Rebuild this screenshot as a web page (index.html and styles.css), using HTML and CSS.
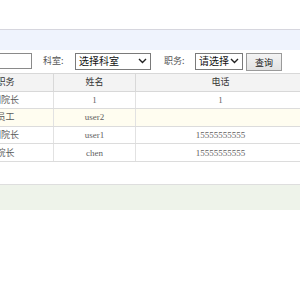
FILE: index.html
```html
<!DOCTYPE html>
<html>
<head>
<meta charset="utf-8">
<link rel="stylesheet" href="styles.css">
</head>
<body>
<div class="page">
  <div class="top"></div>
  <div class="band"></div>
  <div class="filter">
    <span class="input"></span>
    <span class="label lbl1">科室:</span>
    <span class="select sel1"><span>选择科室</span><svg width="9" height="6" viewBox="0 0 9 6"><path d="M1 1 L4.5 4.5 L8 1" fill="none" stroke="#222" stroke-width="1.4"/></svg></span>
    <span class="label lbl2">职务:</span>
    <span class="select sel2"><span>请选择</span><svg width="9" height="6" viewBox="0 0 9 6"><path d="M1 1 L4.5 4.5 L8 1" fill="none" stroke="#222" stroke-width="1.4"/></svg></span>
    <span class="btn">查询</span>
  </div>
  <table class="grid">
    <colgroup><col class="c1"><col class="c2"><col class="c3"></colgroup>
    <thead>
      <tr><th>职务</th><th>姓名</th><th>电话</th></tr>
    </thead>
    <tbody>
      <tr><td>副院长</td><td class="lat">1</td><td class="lat">1</td></tr>
      <tr class="hl"><td>员工</td><td class="lat">user2</td><td class="lat"></td></tr>
      <tr><td>副院长</td><td class="lat">user1</td><td class="lat">15555555555</td></tr>
      <tr><td>院长</td><td class="lat">chen</td><td class="lat">15555555555</td></tr>
    </tbody>
  </table>
  <div class="gap"></div>
  <div class="foot"></div>
</div>
</body>
</html>
```

FILE: styles.css
```css
html, body {
  margin: 0;
  padding: 0;
  background: #fff;
  overflow: hidden;
}
body {
  width: 300px;
  height: 300px;
  font-family: "Noto Sans CJK SC", "Liberation Sans", sans-serif;
  font-size: 9px;
  color: #444;
}
.page {
  width: 348px;
  margin-left: -43px;
}
.top {
  height: 29px;
  border-bottom: 1px solid #d6d6de;
}
.band {
  height: 20px;
  background: #eff3fd;
}
.filter {
  height: 22px;
  display: flex;
  align-items: center;
  padding-left: 13px;
}
.input {
  width: 60px;
  height: 14px;
  border: 1px solid #8a8a8a;
  background: #fff;
}
.label {
  color: #555;
  line-height: 12px;
}
.lbl1 { margin-left: 11px; width: 32px; }
.lbl2 { margin-left: 13px; width: 31px; }
.select {
  height: 15px;
  border: 1px solid #7a7a7a;
  background: #fff;
  display: flex;
  align-items: center;
  justify-content: space-between;
  padding: 0 3px 0 3px;
  box-sizing: content-box;
  color: #111;
  line-height: 12px;
  font-size: 10px;
}
.sel1 { width: 68px; }
.sel2 { width: 40px; }
.btn {
  margin-left: 3px;
  width: 34px;
  height: 16px;
  border: 1px solid #9a9a9a;
  background: linear-gradient(#f4f4f4, #e2e2e2);
  display: flex;
  align-items: center;
  justify-content: center;
  color: #222;
  font-size: 9px;
  margin-top: 2px;
}
.grid {
  width: 348px;
  border-collapse: collapse;
  table-layout: fixed;
  margin-top: 1px;
}
.c1 { width: 96px; }
.c2 { width: 82px; }
.c3 { width: 170px; }
.grid th, .grid td {
  height: 16.6px;
  padding: 0;
  text-align: center;
  border: 1px solid #dcdcdc;
  line-height: 12px;
  font-weight: normal;
}
.grid th {
  background: #f3f3f3;
  color: #333;
  border-color: #d8d8d8;
}
.grid td {
  color: #5a5a5a;
  border-left-color: #e2e2e2;
  border-right-color: #e2e2e2;
}
.grid td.lat {
  font-family: "Liberation Serif", serif;
  font-size: 9px;
  color: #5f5f5f;
}
.grid tr.hl td {
  background: #fffdf0;
}
.gap {
  height: 22px;
  border-bottom: 1px solid #dedede;
}
.foot {
  height: 25px;
  background: #eef3ea;
}
```
